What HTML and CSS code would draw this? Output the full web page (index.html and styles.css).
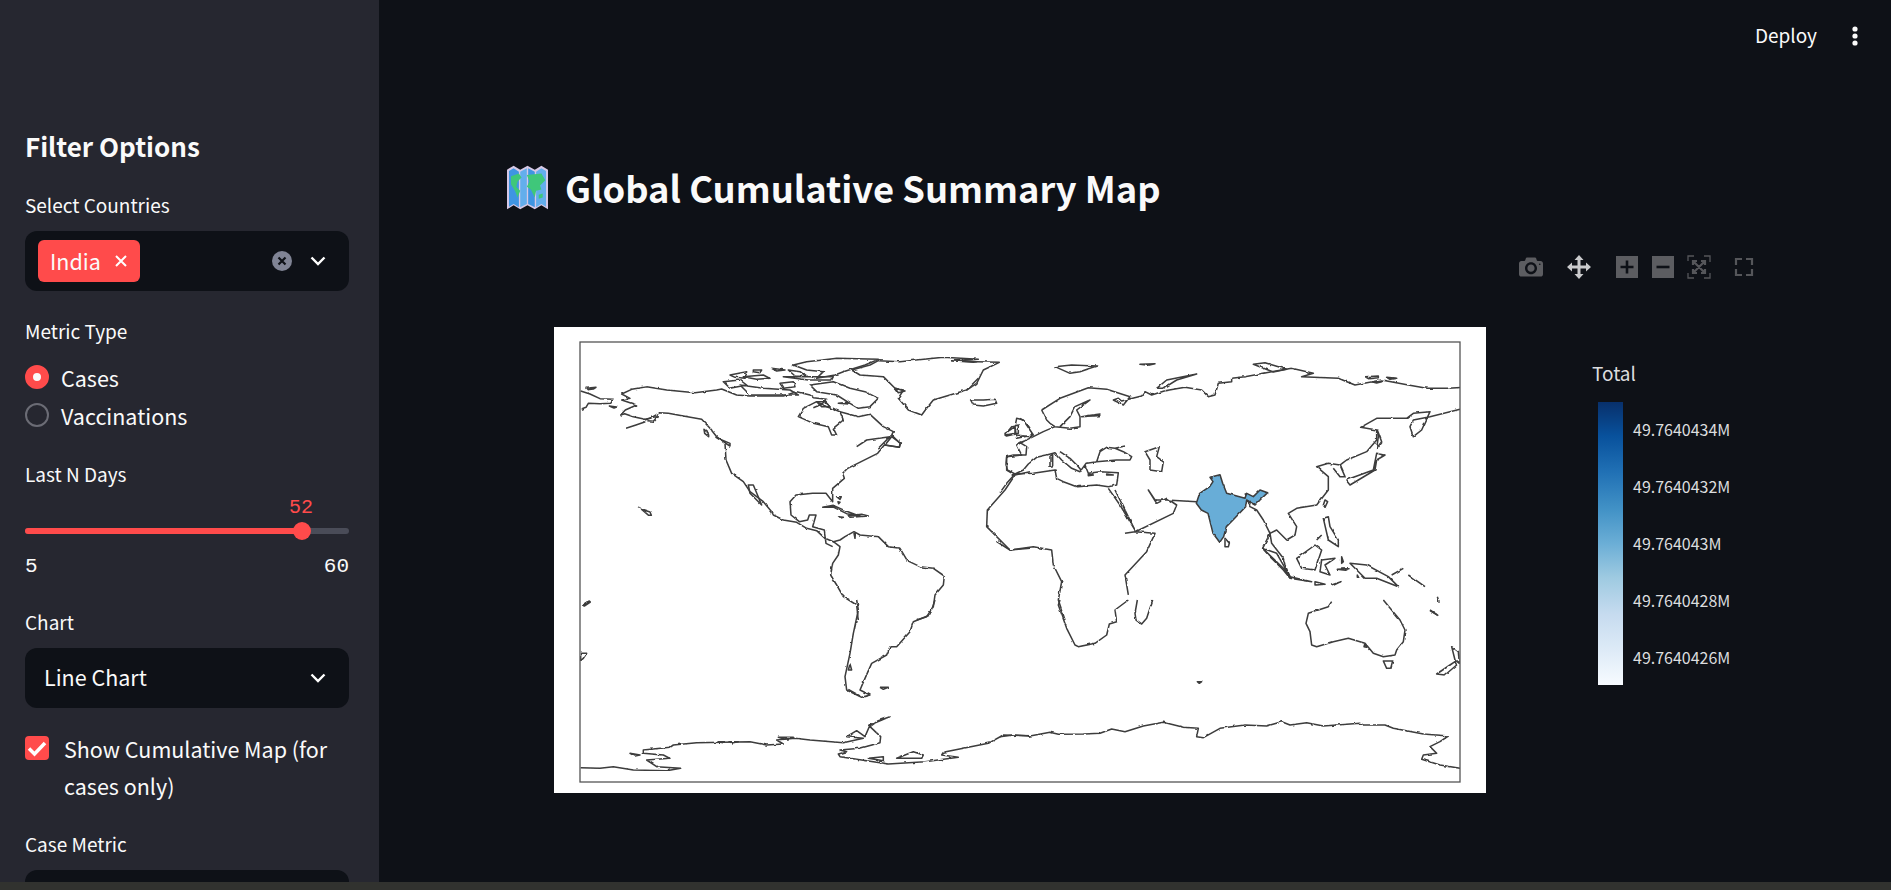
FILE: index.html
```html
<!DOCTYPE html>
<html lang="en">
<head>
  <meta charset="UTF-8" />
  <title>Global Cumulative Summary Map</title>
  <link rel="stylesheet" href="styles.css">
</head>
<body>
  <div class="app">
    <aside class="sidebar">
      <h2 class="side-title">Filter Options</h2>

      <div class="field field-first">
        <div class="field-label">Select Countries</div>
        <div class="select-box multi">
          <span class="tag">India
            <svg class="tag-x" viewBox="0 0 12 12"><path d="M1 1l10 10M11 1L1 11"/></svg>
          </span>
          <span class="spacer"></span>
          <svg class="clear-icon" viewBox="0 0 20 20"><circle cx="10" cy="10" r="10"/><path d="M6.5 6.5l7 7M13.500 6.500l-7 7"/></svg>
          <svg class="chevron" viewBox="0 0 16 10"><path d="M1.500 1.500L8 8l6.500-6.500"/></svg>
        </div>
      </div>

      <div class="field field-radio">
        <div class="field-label">Metric Type</div>
        <div class="radio-row"><span class="radio on"></span>Cases</div>
        <div class="radio-row"><span class="radio"></span>Vaccinations</div>
      </div>

      <div class="field field-slider">
        <div class="field-label">Last N Days</div>
        <div class="slider-value"><span>52</span></div>
        <div class="slider-track"><div class="slider-fill"></div><div class="slider-thumb"></div></div>
        <div class="slider-ends"><span>5</span><span>60</span></div>
      </div>

      <div class="field field-chart">
        <div class="field-label">Chart</div>
        <div class="select-box">
          <span class="select-text">Line Chart</span>
          <span class="spacer"></span>
          <svg class="chevron" viewBox="0 0 16 10"><path d="M1.500 1.500L8 8l6.500-6.500"/></svg>
        </div>
      </div>

      <div class="check-row">
        <span class="check-box"><svg viewBox="0 0 24 24"><path d="M4 12.500l5.500 5.500L20 7"/></svg></span>
        <span class="check-text">Show Cumulative Map (for cases only)</span>
      </div>

      <div class="field field-case">
        <div class="field-label">Case Metric</div>
        <div class="select-box"></div>
      </div>
    </aside>

    <main class="main">
      <header class="topbar">
        <span class="deploy">Deploy</span>
        <svg class="kebab" viewBox="0 0 6 22"><circle cx="3" cy="4" r="2.600"/><circle cx="3" cy="11" r="2.600"/><circle cx="3" cy="18" r="2.600"/></svg>
      </header>

      <section class="content">
        <h1 class="page-title">
          <svg class="map-emoji" viewBox="0 0 31 37">
            <path class="emoji-edge" d="M0 5l5-3 5 3 5.500-3 5.500 3 5-3 5 3v30l-5-3-5 3-5.500-3-5.500 3-5-3-5 3z"/>
            <path class="emoji-sea" d="M1.500 6l3.500-2 4 2.500v27l-4-2.500-3.500 2z"/>
            <path class="emoji-sea2" d="M10 6.500l5-2.500v27l-5 2.500z"/>
            <path class="emoji-sea" d="M16 4l5 2.500v27l-5-2.500z"/>
            <path class="emoji-sea2" d="M22 6.500l4-2.500 3.500 2v27l-3.500-2-4 2.500z"/>
            <path class="emoji-land" d="M3 10l6-2 2 3-3 3-1 4 3 3-2 5-2-5-3-5zM15 9l11-1 3 5-4 4 1 3-4 1-1 5-3-6-3-2 2-4zM24 24l3-1 0 3-3 1z"/>
          </svg>
          Global Cumulative Summary Map
        </h1>

        <div class="modebar">
          <svg class="mode-icon" viewBox="0 0 1000 1000"><path transform="matrix(1 0 0 -1 0 850)" d="m500 450c-83 0-150-67-150-150 0-83 67-150 150-150 83 0 150 67 150 150 0 83-67 150-150 150z m400 150h-120c-16 0-34 13-39 29l-31 93c-6 15-23 28-40 28h-340c-16 0-34-13-39-28l-31-94c-6-15-23-28-40-28h-120c-55 0-100-45-100-100v-450c0-55 45-100 100-100h800c55 0 100 45 100 100v450c0 55-45 100-100 100z m-400-550c-138 0-250 112-250 250 0 138 112 250 250 250 138 0 250-112 250-250 0-138-112-250-250-250z m365 380c-19 0-35 16-35 35 0 19 16 35 35 35 19 0 35-16 35-35 0-19-16-35-35-35z"/></svg>
          <svg class="mode-icon active" viewBox="0 0 24 24"><path d="M12 0l4.500 5H13.500v5.500H19V7.500l5 4.500-5 4.500v-3h-5.500V19h3L12 24l-4.500-5h3v-5.500H5v3L0 12l5-4.500v3h5.500V5h-3z"/></svg>
          <div class="mode-group">
            <svg class="mode-icon box" viewBox="0 0 24 24"><rect x="1" y="1" width="22" height="22"/><path class="cut" d="M12 5.500v13M5.500 12h13"/></svg>
            <svg class="mode-icon box" viewBox="0 0 24 24"><rect x="1" y="1" width="22" height="22"/><path class="cut" d="M5.500 12h13"/></svg>
            <svg class="mode-icon line" viewBox="0 0 24 24"><path d="M1 6V1h6M17 1h6v6M23 18v5h-6M7 23H1v-5"/><path class="thick" d="M6 6l12 12M18 6L6 18M6 10V6h4M14 6h4v4M18 14v4h-4M10 18H6v-4"/></svg>
          </div>
          <svg class="mode-icon line full" viewBox="0 0 24 24"><path class="thick" d="M4 10V4h6M14 4h6v6M20 14v6h-6M10 20H4v-6"/></svg>
        </div>

        <div class="plot-row">
          <div class="map-card">
            <svg class="world" viewBox="0 0 932 466">
              <defs>
                <clipPath id="frame"><rect x="26" y="15" width="880" height="440"/></clipPath>
                <filter id="rough" x="0" y="0" width="100%" height="100%">
                  <feTurbulence type="fractalNoise" baseFrequency="0.16" numOctaves="2" seed="4"/>
                  <feDisplacementMap in="SourceGraphic" scale="2.500" xChannelSelector="R" yChannelSelector="G"/>
                  <feGaussianBlur stdDeviation="0.35"/>
                </filter>
              </defs>
              <g clip-path="url(#frame)">
              <g filter="url(#rough)">
                <g class="coast" transform="translate(-4 -7) scale(.33333)">
                  <path d="M92 213l28 9 30 14 40 2-8 12-32 1-35-1-7 12-16 6"/>
                  <path d="M108 205l30-3-8 5-18 2zM178 258l22 3-8 3zM212 285l12-4 26 9 35 8 15-3 30-17 25 2 45 8 55 10 25 27 20 25 25 20 3 50 17 40 35 25 20 30 40 30 25 30 5 10 30 15 40 7 30 18 30 7 25 23 25 10 20-5 15-10 27-15 18 10 55 5 30 30 35 5 22 37 38 18 40 5 33 23-3 27-25 30-5 35-20 30-30 10"/>
                  <path d="M228 325l30-10 28-10M285 300l22-8 15-2-12 14-18-2"/>
                  <path d="M212 285l14-15 34-15-45-15 25-5-25-13 30-14 45-8 60 10 85 8 65-8 15-3 45 18 40 3 100 0 40-13 40 10 10 8 40 5-15 15-25 10"/>
                  <path d="M745 290l15-25 40-20 30 15 40 15 10 25-30 25 10 20-15 0-10-25-45-10-45-20z"/>
                  <path d="M870 275l55 15 35-7 40 37 30 15-5 10 25 25-2 12-45-7-20 25-30 15-30 15-30 15-15 15 5 15-35 30 0 40-20-25-40 0-50 5-18 20 3 40 25 20 25-5 5-15 20 0-10 35 35 10 5 40 20 10"/>
                  <path d="M920 380l30-20 70-10-35 35M1005 375l20-25 27 20-4 12z"/>
                  <path d="M850 665l20 15-5 25-17 25-6 35 18 30 20 35 40 25 5 45"/>
                  <path d="M905 150l25 15 70 5 35 35 25 5-15 25 30 35 40 15 15-20 20-25 50-15 50-15 30-20 20-40 48-23-68-2-75-3 80-4-105-6-80 8-50 5-65-3-25 13z"/>
                  <path d="M730 135l40-10 90-10 125 3-40 17-65 20-25 10-55 10 20-20-50-5zM1262 240l38 0 35-2 5 12-40 8-30-3zM1205 122l75 3-10 2zM1250 210l20-20 15-15M1035 205l30 8-20 5z"/>
                  <path d="M520 185l50-5 20 15-50 10zM540 165l50-10-5 20-30-3zM610 150l25 0-5 8-20-3zM665 145l40 5-25 3zM715 150l35 5 20 15-35-2zM690 190l40-5 5 15-35 5zM570 195l70 10 80 5 25 15-145 0zM580 170l60-5 20 10-40 3zM700 170l150 0-5 10-70 0zM780 195l70-10 50 20 45 10 40 20-25 25-35 5-25-15-40-25-60-10zM800 245l25 0 15 15-25 0zM850 265l6 3-3 3zM865 250l30-3 0 5z"/>
                  <path d="M462 328l12 10 2 12-12-10zM498 352l42 18 0 8zM595 495l15 0 25 60-35-35zM818 562l32-6 40 18 40 15-40-8-40-20zM895 587l40-4 20 5-55 4zM865 590l15 2-10 3zM860 530l14 0-4 8zM864 545l6 2-4 4zM266 562l4 2-4 0zM275 568l25 8 4 10-8 0z M98 855l20-12 3 3-18 12zM912 640l4 0-1 15z"/>
                  <path d="M1395 465l-30 45-53 60-2 50 70 70 60-5M1410 295l15 10 15 20M1365 345l20-25 20-5 0 25-35 8zM1400 345l40 5M1420 365l-20 10 15 30-45 5 0 40 25 15 45-10"/>
                </g>

                <g class="coast" transform="translate(446 -7) scale(.33333)">
                  <path d="M-10 665l40 25 70-10 55 10 5 45 25 50-10 55 20 60"/>
                  <path d="M125 270l55-35 85-32 55 5 70 22-20 25-30-15 15-5 10 8 60-15 10-13 20 10 40-13 60-10 50 8 20 20 20-5 10-35 40-5 0-10 40-5 80-15 60-10 65 15-35 10 110 5 50 20 80-15 80 15 55 10 65 0 50-3"/>
                  <path d="M1380 268l-90 22-50 10-10 20 10 30 25-20 25-55-50 5-20 15-90 0-48 27 48 8 0 30-30 35-60 25-20 15-35-5-35 10 35 30 0 40-35 45-60 10-25 15 25 40-5 25-25 15-30-30-20 10-20-40-20-30-20-10-10-30-5-10"/>
                  <path d="M810 640l5 30 35 45 5 20 15 35 65 15-65-10-20-25-40-40-22-25z"/>
                  <path d="M125 270l15 30 10 10 15 10 45 5 30-5 0-30-10-20 40-30-45 20-15 30-30 30M245 290l55-8-5 5z"/>
                  <path d="M165 320L130 335 100 350 75 362 60 368 80 380 78 405 40 405 20 410 18 430 22 450 45 462 70 450 85 432 110 412 140 405 165 398 185 420 215 445 240 455 258 430 290 425 300 395 320 382 345 385 375 378M345 385L370 395 395 410 390 420 350 420 290 425M255 435L265 460 300 455 355 458 350 495 325 500 290 495 230 500 190 485 170 475 165 450 100 460 45 462 20 490 0 518"/>
                  <path d="M180 395l30 20 25 25 12 15M150 410l8-8 0 35-8 2zM50 355l-5-35 5-25 20 5 30 45zM15 340l30-20 0 20-27 5zM265 462l15 3-15 2zM320 462l20 3-20 0z"/>
                  <path d="M435 395l43-15-8 30 20 15-5 30-35-5 0-30z"/>
                  <path d="M165 140l50-5 75 3-50 17-30 5zM420 133l45-2-20 5zM470 205l30-25 90-18-60 18-40 25zM760 133l35-5 65 20-40 8zM1095 170l40-2 0 5-30 3zM1160 172l30 3-20 3zM1115 185l30 0-15 4z"/>
                  <path d="M325 505l35 50 45 75 0 5-30 5M345 510l30 60 30 60 0 6 115-56 10-25-30-20-30 15-25-40 20 30 35 0 90 5 15-3M405 635l60 5-25 55-65 70 10 60"/>
                  <path class="india" d="M630 472l30-8 8 26 12 30 55 15 5-15 20 10 20-20 23 8-23 22-15 15-25-15-3 20-38 40-20 20-8 30-12 17-20-27-15-60-20-10-15-20 10-30 30-20 10-15z"/>
                  <path d="M675 655l13 15-3 10-10 0zM975 540l8 5-8 17-5-7z"/>
                  <path d="M1038 480l82-30 10-50 25 5-25 15-5 30-75 45zM1132 330l13 35-15 20 5-35zM1020 435l15 35-15 0-20-25"/>
                  <path d="M970 595l15-5 5 30 25 40 0 20-30-20zM950 660l15-15M890 715l55-40 20 15-20 60-40-5zM788 685l42 15 40 70-20-25zM945 785l30 8-30 2zM995 795l28-10-25 12zM965 720l40-5-30 20 15 30-30-10zM1012 748l35-2-10 5zM1025 710l5 15-5 5zM1072 765l5 10-5 0zM1050 730l50 5 65 35 30 30-65-25-35 0zM1175 765l35-20M1225 765l50 35M1312 830l5 15M1290 872l25 15"/>
                </g>

                <g class="coast" transform="translate(-4 273) scale(.33333)">
                  <path d="M920 0l5 30-15 70-10 60-15 70 5 40 45 22 25-7-30-15 15-35 20-45 45-25 10-25 20 0 40-45 10-30 50-20 15-45"/>
                  <path d="M900 192l5 18-10 0zM895 268l35 20M990 262l25 0-15 6zM92 160l18 0-10 15-8 7zM98 15l15-10"/>
                  <path d="M92 503l58 2 40-5 60 10 100 2 42-7-72-5-30-20 70-5-20-10-60-5 0-10 80-8 10-7 70-7 160-3 50 10 50-3-20-12 55-5 45 5 100 8 60-13-50-5 30-18 25 18 15-35 60-25-35 12-25 18 32 30-2 18-60 17-60 5 20 5-25 7 5 8 145 22 110-7 100-13-50-7 5-8 135-27 45-25 80 2"/>
                  <path d="M1040 475l50-20 30 10-5 10zM955 475l45-5 0 12zM240 460l30 5-15 3zM505 425l20 0-5 3zM540 425l25 0-20 4zM685 412l48 0-30 5z"/>
                </g>

                <g class="coast" transform="translate(446 273) scale(.33333)">
                  <path d="M385 0l-40 30 5 35-22 7-8 33-35 25-50 10-10-5-25-50-25-70 5-15"/>
                  <path d="M458 0l-18 55-15 17-17-12-3-20 7-40"/>
                  <path d="M1150 0l50 60 15 30-5 35-20 25-5 15-35 5-30-10-25-30-50-15-45 10-50 15-15-5-5-40-12-25 7-30 60-20 10-15M1095 130l5 12-8-2zM1150 183l28 0-6 22-12 0zM1290 30l22 15M1315 0l2 5"/>
                  <path d="M1355 140l20 15 3 35-13-10zM1310 222l40-27 15-10 5 10-35 30z"/>
                  <path d="M592 245l13 0-7 5z"/>
                  <path d="M0 410l40-5 50 3 60-11 25 6 75-1 50-2 35-13 40 8 55-17 60-11 60 15 45 3-5 25 20 3 50-28 75-10 65 3 45-13 25 10 50-7 50 10 110-8 10 5 65 0 25 10 90 17 75 6-25 17-30 15 20 20-40 5-5 13 55 17 60 10"/>
                </g>
              </g>
              </g>
              <rect class="frame-line" x="26" y="15" width="880" height="440"/>
            </svg>
          </div>

          <div class="legend">
            <div class="legend-title">Total</div>
            <div class="legend-body">
              <div class="legend-bar"></div>
              <div class="legend-ticks">
                <span>49.7640434M</span>
                <span>49.7640432M</span>
                <span>49.764043M</span>
                <span>49.7640428M</span>
                <span>49.7640426M</span>
              </div>
            </div>
          </div>
        </div>
      </section>
    </main>
  </div>
  <div class="bottom-bar"></div>
</body>
</html>
```

FILE: styles.css
```css
* {
  box-sizing: border-box;
}
html, body {
  margin: 0;
  padding: 0;
  width: 100%;
  height: 100%;
  overflow: hidden;
  background-color: #0e1117;
  color: #fafafa;
  font-family: "Noto Sans CJK SC", "Noto Sans", sans-serif;
}
.app {
  display: flex;
  height: 882px;
}
.bottom-bar {
  height: 8px;
  background-color: #31322f;
}

/* sidebar */
.sidebar {
  width: 379px;
  flex-shrink: 0;
  height: 100%;
  overflow: hidden;
  padding: 126px 30px 0 25px;
  background-color: #262730;
}
.side-title {
  margin: 0;
  font-size: 26px;
  line-height: 40px;
  font-weight: 600;
}
.field {
  margin-top: 17px;
}
.field-first {
  margin-top: 25px;
}
.field-label {
  font-size: 19px;
  line-height: 28px;
  margin-bottom: 12px;
}
.select-box {
  display: flex;
  align-items: center;
  height: 60px;
  padding: 0 23px 0 19px;
  border-radius: 12px;
  background-color: #0e1117;
}
.select-box.multi {
  padding-left: 13px;
}
.spacer {
  flex: 1;
}
.tag {
  display: flex;
  align-items: center;
  gap: 14px;
  height: 42px;
  padding: 0 13px 2px 12px;
  border-radius: 6px;
  background-color: #ff4b4b;
  font-size: 21.500px;
}
.tag-x {
  width: 12px;
  height: 12px;
  margin-top: 2px;
  fill: none;
  stroke: #fff;
  stroke-width: 2;
}
.clear-icon {
  width: 20px;
  height: 20px;
  margin-right: 18px;
}
.clear-icon circle {
  fill: #808495;
}
.clear-icon path {
  fill: none;
  stroke: #0e1117;
  stroke-width: 2.200;
}
.chevron {
  width: 16px;
  height: 10px;
  fill: none;
  stroke: #fff;
  stroke-width: 2.400;
}
.select-text {
  padding-bottom: 4px;
  font-size: 21.500px;
}
.field-radio {
  margin-top: 26px;
}
.field-radio .field-label {
  margin-bottom: 13px;
}
.radio-row {
  display: flex;
  align-items: center;
  gap: 12px;
  height: 38px;
  font-size: 21.500px;
}
.radio {
  width: 24px;
  height: 24px;
  border-radius: 50%;
  border: 2px solid #6b6c75;
}
.radio.on {
  border: 8px solid #ff4b4b;
  background-color: #fafafa;
}
.field-slider {
  margin-top: 26px;
}
.field-slider .field-label {
  margin-bottom: 0;
}
.slider-value {
  height: 28px;
  margin-top: 6px;
  color: #ff4b4b;
  font-family: "Liberation Mono", monospace;
  font-size: 20px;
  line-height: 28px;
  padding-left: 264px;
}
.slider-track {
  position: relative;
  height: 6px;
  margin-top: 6px;
  border-radius: 3px;
  background-color: #4a4c58;
}
.slider-fill {
  width: 277px;
  height: 6px;
  border-radius: 3px;
  background-color: #ff4b4b;
}
.slider-thumb {
  position: absolute;
  left: 268px;
  top: -6px;
  width: 18px;
  height: 18px;
  border-radius: 50%;
  background-color: #ff4b4b;
}
.slider-ends {
  display: flex;
  justify-content: space-between;
  margin-top: 19px;
  font-family: "Liberation Mono", monospace;
  font-size: 21px;
  line-height: 28px;
}
.field-chart {
  margin-top: 27px;
}
.check-row {
  display: flex;
  gap: 15px;
  margin-top: 22px;
  font-size: 21.500px;
  line-height: 37px;
}
.check-box {
  flex-shrink: 0;
  width: 24px;
  height: 24px;
  margin-top: 6px;
  border-radius: 4px;
  background-color: #ff4b4b;
}
.check-box svg {
  display: block;
  fill: none;
  stroke: #fff;
  stroke-width: 3.500;
}
.field-case {
  margin-top: 26px;
}

/* main area */
.main {
  flex: 1;
  min-width: 0;
}
.topbar {
  display: flex;
  align-items: center;
  justify-content: flex-end;
  gap: 35px;
  height: 72px;
  padding-right: 33px;
}
.deploy {
  padding-bottom: 4px;
  font-size: 19px;
}
.kebab {
  width: 6px;
  height: 22px;
  fill: #fafafa;
}
.content {
  padding-left: 128px;
}
.page-title {
  display: flex;
  align-items: center;
  gap: 17px;
  height: 60px;
  margin: 85px 0 0;
  font-size: 36.300px;
  font-weight: 600;
}
.map-emoji {
  width: 41px;
  height: 49px;
}
.emoji-edge {
  fill: #d6c9e6;
}
.emoji-sea {
  fill: #3f95e2;
}
.emoji-sea2 {
  fill: #63aeec;
}
.emoji-land {
  fill: #3fc77a;
}

/* plotly toolbar */
.modebar {
  display: flex;
  align-items: center;
  gap: 24px;
  height: 24px;
  margin: 38px 0 0 1012px;
  width: max-content;
}
.mode-group {
  display: flex;
  gap: 12px;
}
.mode-icon {
  display: block;
  width: 24px;
  height: 24px;
  fill: #5c5d61;
}
.mode-icon.active {
  fill: #c9cacc;
}
.mode-icon .cut {
  fill: none;
  stroke: #0e1117;
  stroke-width: 2.600;
}
.mode-icon.line path {
  fill: none;
  stroke: #55565a;
  stroke-width: 1.300;
}
.mode-icon.line path.thick {
  stroke-width: 2.200;
}
.mode-icon.full {
  margin-left: -3px;
}

/* map + colour bar */
.plot-row {
  display: flex;
  margin: 48px 0 0 47px;
}
.map-card {
  width: 932px;
  height: 466px;
  background-color: #fff;
}
.world {
  display: block;
  width: 932px;
  height: 466px;
}
.coast path {
  fill: none;
  stroke: #3c3c3c;
  stroke-width: 4.600;
  stroke-linejoin: round;
}
.coast path.india {
  fill: #67add7;
}
.frame-line {
  fill: none;
  stroke: #555;
  stroke-width: 1.300;
}
.legend {
  margin: 34px 0 0 106px;
  color: #dcdddf;
}
.legend-title {
  font-size: 19px;
  line-height: 24px;
}
.legend-body {
  display: flex;
  gap: 10px;
  margin-top: 17px;
  padding-left: 6px;
}
.legend-bar {
  width: 25px;
  height: 283px;
  background: linear-gradient(to bottom, #08306b 0%, #08519c 12%, #2171b5 25%, #4292c6 38%, #6baed6 50%, #9ecae1 62%, #c6dbef 75%, #deebf7 88%, #f7fbff 100%);
}
.legend-ticks {
  display: flex;
  flex-direction: column;
  gap: 33px;
  padding-top: 15px;
  font-size: 16px;
  line-height: 24px;
}
```
